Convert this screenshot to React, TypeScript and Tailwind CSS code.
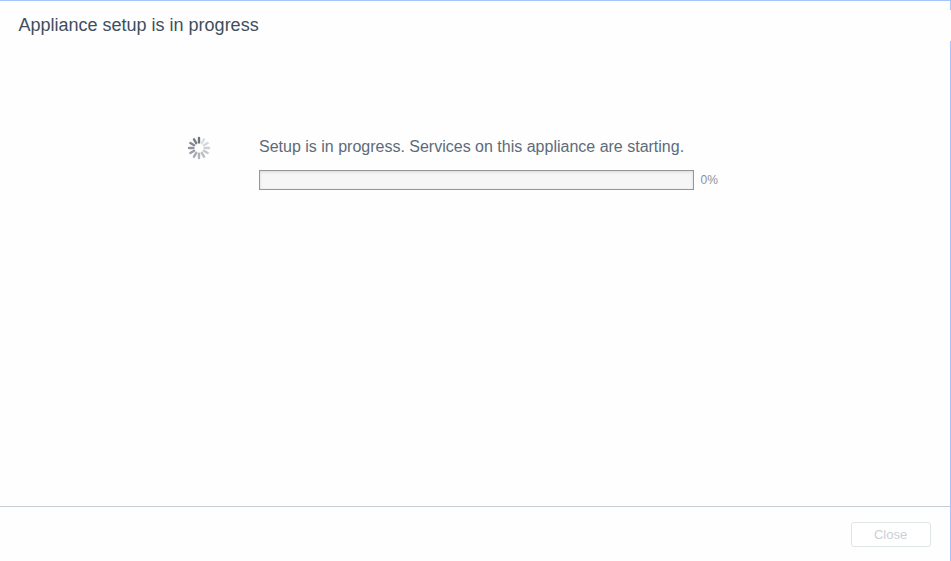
const colors = ["#6d7480", "#dcdde0", "#d5d7da", "#cccfd3", "#c4c7cb", "#bbbec3", "#b0b4b9", "#a6aab1", "#9a9fa7", "#8f959e", "#838994", "#777e89"];

function Spinner() {
  return (
    <svg width="24" height="24" viewBox="0 0 24 24" className="block">
      {colors.map((c, i) => (
        <line key={i} x1="12" y1="2" x2="12" y2="6.4" stroke={c} strokeWidth="2.4" strokeLinecap="round" transform={`rotate(${i * 30} 12 12)`} />
      ))}
    </svg>
  );
}

export default function App() {
  return (
    <div className="flex h-[561px] w-[951px] flex-col border-t border-[#a4c4fb] bg-[#fefefe] font-['Liberation_Sans',Arial,sans-serif]">
      <header className="flex h-[40px] justify-between">
        <h1 className="pl-[18.5px] pt-[12px] text-[18px] leading-6 text-[#3f4e5c]">Appliance setup is in progress</h1>
        <div className="h-[9px] w-px bg-[#a4c4fb]" />
      </header>
      <div className="flex grow flex-col border-r border-[#a4c4fb]">
        <main className="flex grow pl-[187px] pt-[95px]">
          <Spinner />
          <section className="ml-[48px]">
            <p className="pt-px text-[16px] leading-[20px] text-[#5d6b79]">Setup is in progress. Services on this appliance are starting.</p>
            <div className="mt-[13px] flex items-center">
              <div className="h-[20px] w-[435px] border border-[#949698] bg-[#f6f6f6] shadow-[inset_0_1px_3px_rgba(0,0,0,0.12)]" />
              <span className="ml-[6.5px] text-[12px] leading-5 text-[#8b9198]">0%</span>
            </div>
          </section>
        </main>
        <footer className="flex h-[55px] justify-end border-t border-[#c5ced5] pr-[19px] pt-[15px]">
          <button className="h-[25px] w-[80px] rounded-[3px] border border-[#e0e5e8] bg-white pr-px text-[13px] leading-[23px] text-[#c9d0d6]">Close</button>
        </footer>
      </div>
    </div>
  );
}
